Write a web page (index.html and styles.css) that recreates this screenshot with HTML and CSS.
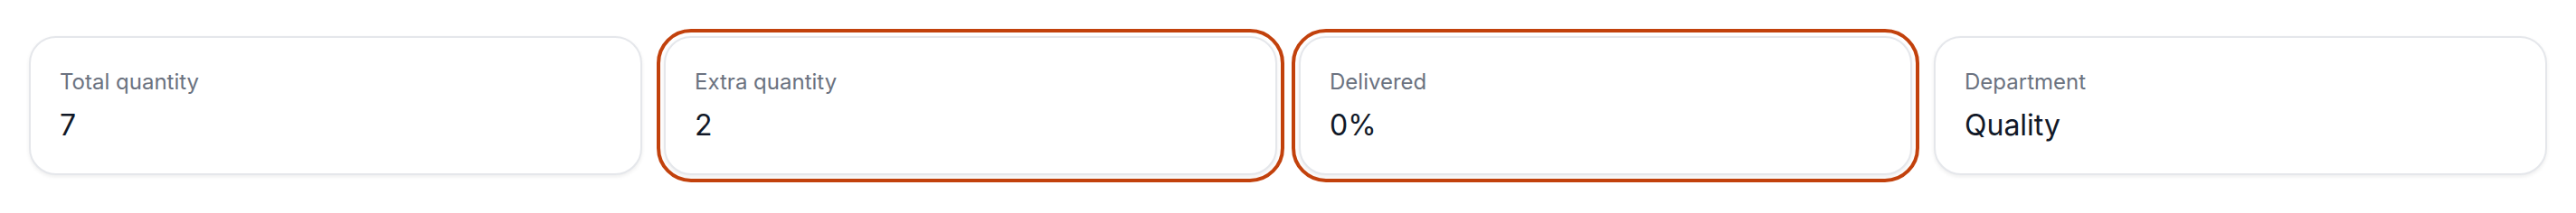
FILE: index.html
```html
<!DOCTYPE html>
<html lang="en">
<head>
<meta charset="utf-8">
<title>Stats</title>
<link rel="stylesheet" href="styles.css">
</head>
<body>
<div class="stats">
  <div class="card">
    <div class="label">Total quantity</div>
    <div class="value">7</div>
  </div>
  <div class="card card--focus">
    <div class="label">Extra quantity</div>
    <div class="value">2</div>
  </div>
  <div class="card card--focus">
    <div class="label">Delivered</div>
    <div class="value">0%</div>
  </div>
  <div class="card">
    <div class="label">Department</div>
    <div class="value">Quality</div>
  </div>
</div>
</body>
</html>
```

FILE: styles.css
```css
html, body {
  margin: 0;
  padding: 0;
  background: #ffffff;
}

body {
  font-family: Inter, "Noto Sans", "Liberation Sans", sans-serif;
  min-height: 236px;
}

.stats {
  display: grid;
  grid-template-columns: repeat(4, 1fr);
  gap: 24px;
  padding: 40px 32px 42px 32px;
}

.card {
  background: #ffffff;
  border: 2px solid #e5e7eb;
  border-radius: 30px;
  box-shadow: 0 2px 4px rgba(0, 0, 0, 0.07);
  padding: 33px 32px 31px 32px;
}

.card--focus {
  outline: 4px solid #c2410c;
  outline-offset: 4px;
}

.label {
  font-size: 24px;
  line-height: 32px;
  color: #6b7280;
}

.value {
  margin-top: 10px;
  font-size: 32px;
  line-height: 44px;
  font-weight: 400;
  color: #111827;
}
```
